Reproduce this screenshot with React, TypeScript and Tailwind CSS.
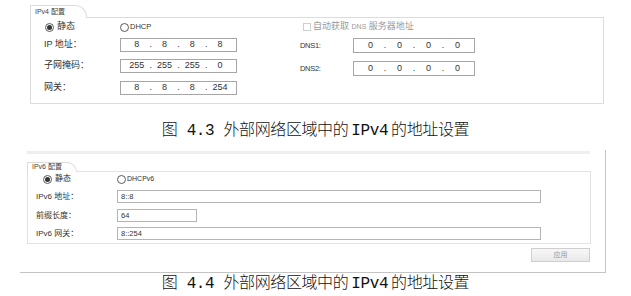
const ui = "font-['Liberation_Sans','Noto_Sans_CJK_SC',sans-serif]";
const cap = "font-['Liberation_Mono','Noto_Sans_CJK_SC',monospace]";

const Radio = ({ checked }: { checked?: boolean }) => (
    <span className="flex h-[9px] w-[9px] items-center justify-center rounded-full border border-[#5a5a5a] bg-white">
        {checked && <span className="h-[5px] w-[5px] rounded-full bg-[#333]" />}
    </span>
);

const IpBox = ({ parts, className }: { parts: string[]; className: string }) => (
    <div className={`flex items-center border border-[#a6a6a6] bg-white px-[5px] text-[9px] text-[#333] ${className}`}>
        {parts.map((p, i) => (
            <div key={i} className="contents">
                {i > 0 && <span className="w-[6px] text-center">.</span>}
                <span className="flex-1 text-center">{p}</span>
            </div>
        ))}
    </div>
);

const Tab = ({ label, className }: { label: string; className: string }) => (
    <div className={`relative z-10 -mb-px flex items-center rounded-tr-[12px] border-l border-r border-t border-[#dcdcdc] bg-white pl-[4px] text-[7px] text-[#444] ${className}`}>
        {label}
    </div>
);

// figure caption, SimSun-ish: mono latin, tight gaps around IPv4
const Caption = ({ num, className }: { num: string; className: string }) => (
    <p className={`text-center text-[16px] font-light leading-[20px] tracking-[-0.4px] text-[#111] ${cap} ${className}`}>
        图 {num} 外部网络区域中的<span className="mx-[3px]">IPv4</span>的地址设置
    </p>
);

const Ipv4Panel = () => (
    <div className="flex flex-col pl-[30px] pt-[5px]">
        <Tab label="IPv4 配置" className="h-[13px] w-[57px]" />
        <div className="flex h-[87px] w-[574px] border border-[#dcdcdc] bg-white">
            {/* left half */}
            <div className="flex w-[269px] flex-col pl-[13px]">
                <div className="mt-[4px] flex h-[10px] items-center text-[9px] text-[#333]">
                    <div className="flex w-[76px] items-center gap-[3px] pl-[1px]">
                        <Radio checked />
                        <span>静态</span>
                    </div>
                    <div className="flex items-center gap-[1px] text-[7.5px]">
                        <Radio />
                        <span>DHCP</span>
                    </div>
                </div>
                <div className="mt-[6px] flex h-[14px] items-center text-[9px] text-[#333]">
                    <span className="w-[76px]">IP 地址：</span>
                    <IpBox parts={['8', '8', '8', '8']} className="h-[14px] w-[117px]" />
                </div>
                <div className="mt-[7px] flex h-[14px] items-center text-[9px] text-[#333]">
                    <span className="w-[76px]">子网掩码：</span>
                    <IpBox parts={['255', '255', '255', '0']} className="h-[14px] w-[117px]" />
                </div>
                <div className="mt-[8px] flex h-[14px] items-center text-[9px] text-[#333]">
                    <span className="w-[76px]">网关：</span>
                    <IpBox parts={['8', '8', '8', '254']} className="h-[14px] w-[117px]" />
                </div>
            </div>
            {/* right half */}
            <div className="flex flex-col">
                <div className="mt-[4px] flex h-[10px] items-center gap-[2px] text-[9px] text-[#9a9a9a]">
                    <span className="ml-[3px] h-[8px] w-[8px] border border-[#cfcfcf] bg-white" />
                    <span>自动获取 <span className="text-[7px]">DNS</span> 服务器地址</span>
                </div>
                <div className="mt-[6px] flex h-[15px] items-center text-[7.5px] text-[#333]">
                    <span className="w-[53px] tracking-[-0.3px]">DNS1:</span>
                    <IpBox parts={['0', '0', '0', '0']} className="h-[15px] w-[122px]" />
                </div>
                <div className="mt-[8px] flex h-[15px] items-center text-[7.5px] text-[#333]">
                    <span className="w-[53px] tracking-[-0.3px]">DNS2:</span>
                    <IpBox parts={['0', '0', '0', '0']} className="h-[15px] w-[122px]" />
                </div>
            </div>
        </div>
    </div>
);

const TextBox = ({ value, className }: { value: string; className: string }) => (
    <div className={`flex items-center border border-[#b4b4b4] bg-white pl-[3px] text-[7.5px] text-[#333] ${className}`}>
        {value}
    </div>
);

const Ipv6Frame = () => (
    <div className="ml-[20px] mt-[9px] flex w-[586px] flex-col border-b border-r border-[#c4c4c4] pb-[10px]">
        <div className="ml-[7px] mt-[1px] h-[3px] w-[563px] bg-[#eeeeee]" />
        <div className="ml-[7px] mt-[8px] flex flex-col">
            <Tab label="IPv6 配置" className="h-[10px] w-[50px] text-[6.5px]" />
            <div className="flex h-[73px] w-[564px] flex-col border border-[#e2e2e2] bg-white pl-[8px]">
                <div className="mt-[2px] flex h-[10px] items-center text-[8px] text-[#333]">
                    <div className="flex w-[81px] items-center gap-[3px] pl-[7px]">
                        <Radio checked />
                        <span>静态</span>
                    </div>
                    <div className="flex items-center gap-[1px] text-[7px]">
                        <Radio />
                        <span>DHCPv6</span>
                    </div>
                </div>
                <div className="mt-[6px] flex h-[13px] items-center text-[8px] text-[#333]">
                    <span className="w-[81px]">IPv6 地址：</span>
                    <TextBox value="8::8" className="h-[13px] w-[424px]" />
                </div>
                <div className="mt-[6px] flex h-[13px] items-center text-[8px] text-[#333]">
                    <span className="w-[81px]">前缀长度：</span>
                    <TextBox value="64" className="h-[13px] w-[80px]" />
                </div>
                <div className="mt-[5px] flex h-[13px] items-center text-[8px] text-[#333]">
                    <span className="w-[81px]">IPv6 网关：</span>
                    <TextBox value="8::254" className="h-[13px] w-[424px]" />
                </div>
            </div>
        </div>
        <button className="mr-[15px] mt-[4px] flex h-[14px] w-[59px] items-center justify-center self-end border border-[#cfcfcf] bg-gradient-to-b from-[#f7f7f7] to-[#e9e9e9] text-[7px] text-[#9a9a9a]">
            应用
        </button>
    </div>
);

export default function App() {
    return (
        <div className={`flex h-[296px] w-[631px] flex-col overflow-hidden bg-white ${ui}`}>
            <Ipv4Panel />
            <Caption num="4.3" className="mt-[17px]" />
            <Ipv6Frame />
            <Caption num="4.4" className="mt-[1px]" />
        </div>
    );
}
